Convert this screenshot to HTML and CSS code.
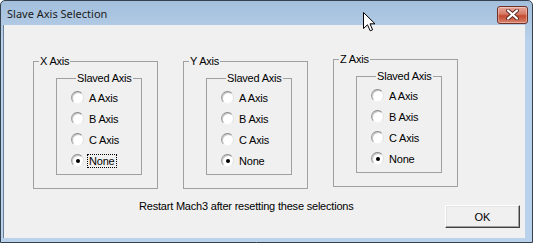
FILE: index.html
```html
<!DOCTYPE html>
<html lang="en">
<head>
  <meta charset="UTF-8" />
  <title>Slave Axis Selection</title>
  <link rel="stylesheet" href="styles.css">
</head>
<body>

  <div class="window">
    <div class="titlebar">
      <span class="title">Slave Axis Selection</span>
      <button class="close" title="Close">
        <svg width="15" height="11" viewBox="0 0 15 11">
          <path d="M3 1.5 L12 9.5 M12 1.5 L3 9.5" stroke="#5a2a22" stroke-width="4" stroke-linecap="round"/>
          <path d="M3 1.5 L12 9.5 M12 1.5 L3 9.5" stroke="#fff" stroke-width="2.2" stroke-linecap="round"/>
        </svg>
      </button>
    </div>

    <div class="client">
      <div class="groups">

        <fieldset class="group">
          <legend>X Axis</legend>
          <fieldset class="slaved">
            <legend>Slaved Axis</legend>
            <label class="radio"><span class="dot"></span>A Axis</label>
            <label class="radio"><span class="dot"></span>B Axis</label>
            <label class="radio"><span class="dot"></span>C Axis</label>
            <label class="radio checked"><span class="dot"></span><span class="focus">None</span></label>
          </fieldset>
        </fieldset>

        <fieldset class="group">
          <legend>Y Axis</legend>
          <fieldset class="slaved">
            <legend>Slaved Axis</legend>
            <label class="radio"><span class="dot"></span>A Axis</label>
            <label class="radio"><span class="dot"></span>B Axis</label>
            <label class="radio"><span class="dot"></span>C Axis</label>
            <label class="radio checked"><span class="dot"></span>None</label>
          </fieldset>
        </fieldset>

        <fieldset class="group group-z">
          <legend>Z Axis</legend>
          <fieldset class="slaved">
            <legend>Slaved Axis</legend>
            <label class="radio"><span class="dot"></span>A Axis</label>
            <label class="radio"><span class="dot"></span>B Axis</label>
            <label class="radio"><span class="dot"></span>C Axis</label>
            <label class="radio checked"><span class="dot"></span>None</label>
          </fieldset>
        </fieldset>

      </div>

      <div class="footer">
        <span class="note">Restart Mach3 after resetting these selections</span>
        <button class="ok">OK</button>
      </div>
    </div>

    <!-- mouse pointer caught in the screenshot -->
    <svg class="pointer" width="13" height="20" viewBox="0 0 13 20">
      <path d="M0.5 0.5 L0.5 16.5 L4.5 12.8 L7.2 18.8 L9.6 17.8 L7 11.8 L12 11.8 Z" fill="#fff" stroke="#000" stroke-width="1"/>
    </svg>
  </div>

</body>
</html>
```

FILE: styles.css
```css
body {
  margin: 0;
  background: #fff;
  font-family: "Liberation Sans", Arial, sans-serif;
  font-size: 11px;
  letter-spacing: -0.2px;
  color: #000;
}
.window {
  position: relative;
  width: 533px;
  height: 243px;
  box-sizing: border-box;
  display: flex;
  flex-direction: column;
  border: 1px solid #34414f;
  border-radius: 5px 5px 0 0;
  padding: 0 7px 4px 2px;
  background: linear-gradient(#a3bfdc, #b9d1ea 40px);
  overflow: hidden;
}
.titlebar {
  height: 24px;
  display: flex;
  align-items: center;
  margin-right: -7px;
}
.title {
  font-family: "Noto Sans", "Segoe UI", sans-serif;
  font-size: 11px;
  letter-spacing: 0;
  color: #1b1b1b;
  padding-left: 4px;
  margin-top: 1px;
}
.close {
  margin-left: auto;
  margin-right: 4px;
  margin-top: 3px;
  width: 31px;
  height: 18px;
  padding: 0;
  display: flex;
  align-items: center;
  justify-content: center;
  border: 1px solid #6d2f26;
  border-radius: 3px;
  background: linear-gradient(#e9a99b, #d57966 45%, #c4492f 55%, #d7826c);
  box-shadow: inset 0 0 0 1px rgba(255, 255, 255, 0.35);
}
.client {
  flex: 1;
  display: flex;
  flex-direction: column;
  background: #f0f0f0;
  border-left: 1px solid #6c7f95;
}
.groups {
  display: flex;
  align-items: flex-start;
  gap: 25px;
  padding: 30px 0 0 29px;
}
fieldset {
  margin: 0;
  padding: 0;
  border: 1px solid #a0a0a0;
  min-width: 0;
}
legend {
  line-height: 13px;
  padding: 0 1px;
}
.group {
  width: 125px;
  box-sizing: border-box;
}
.group > legend {
  margin-left: 5px;
}
.group-z {
  margin-top: -2px;
}
.slaved {
  width: 86px;
  box-sizing: border-box;
  margin: 4px 0 13px 22px;
  padding: 2px 0 3px 14px;
}
.slaved > legend {
  margin-left: 5px;
}
.radio {
  height: 21px;
  display: flex;
  align-items: center;
  gap: 5px;
}
.dot {
  width: 11px;
  height: 11px;
  border-radius: 50%;
  border: 1px solid;
  border-color: #8a8a8a #e2e2e2 #f4f4f4 #9a9a9a;
  background: radial-gradient(circle at 60% 60%, #fff 55%, #e6e6e6);
  box-shadow: inset 1px 1px 0 #c8c8c8;
  display: flex;
  align-items: center;
  justify-content: center;
}
.checked .dot::after {
  content: "";
  width: 4px;
  height: 4px;
  border-radius: 50%;
  background: #000;
}
.focus {
  outline: 1px dotted #000;
  outline-offset: 0;
  padding: 0 1px;
  margin-left: -1px;
}
.footer {
  display: flex;
  align-items: flex-start;
  margin-top: 11px;
  padding-left: 135px;
}
.ok {
  margin: 5px 5px 0 auto;
  width: 75px;
  height: 23px;
  padding: 0;
  font-family: inherit;
  font-size: 11px;
  background: #f0f0f0;
  border: 1px solid;
  border-color: #fff #404040 #404040 #fff;
  box-shadow: inset -1px -1px 0 #a0a0a0, inset 1px 1px 0 #e3e3e3;
}
.pointer {
  position: absolute;
  left: 362px;
  top: 11px;
}
```
